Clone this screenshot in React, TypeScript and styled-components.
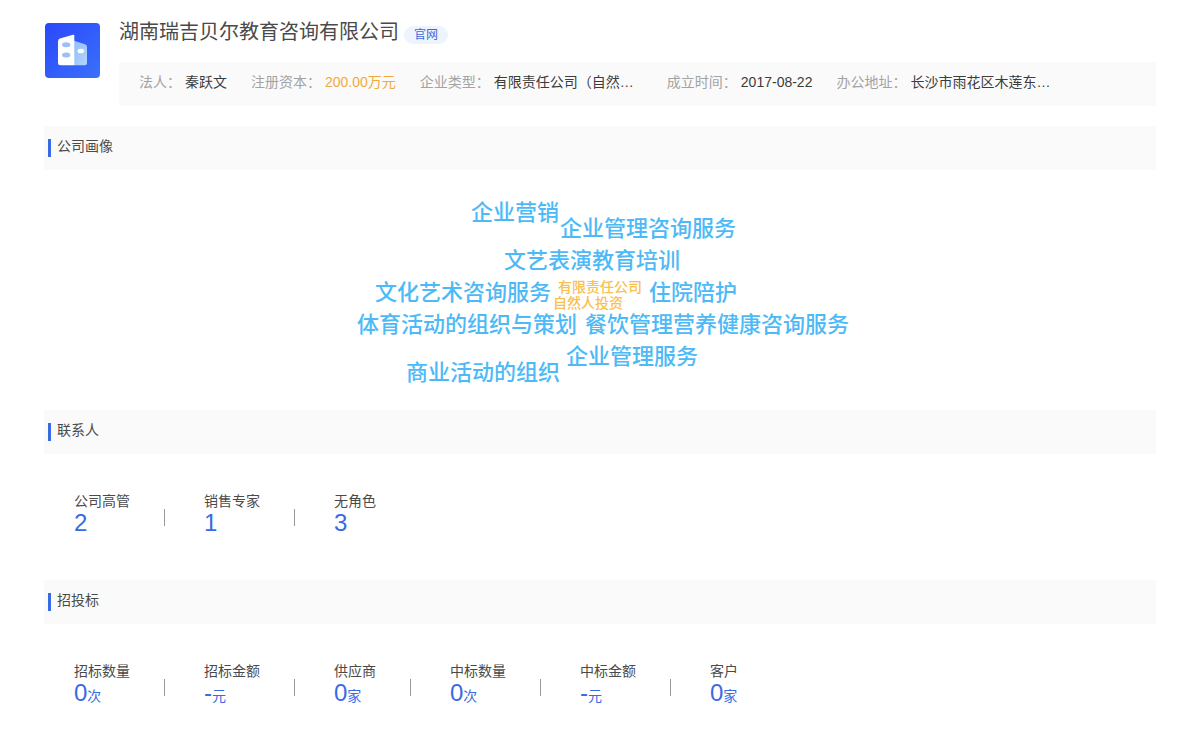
import React from "react";
import styled, { createGlobalStyle } from "styled-components";

const GlobalStyle = createGlobalStyle`
  * { box-sizing: border-box; }
  body {
    margin: 0;
    background: #fff;
    color: #4a4a4a;
    font-family: "Liberation Sans", "Noto Sans CJK SC", sans-serif;
    font-size: 14px;
    line-height: 20px;
  }
  h1, h2, dl, dt, dd { margin: 0; font-weight: 400; }
`;

const Page = styled.main`
  padding: 20px 44px;
`;

const Header = styled.header`
  display: flex;
  gap: 19px;
  padding-left: 1px;
  margin-bottom: 20px;
`;

const Logo = styled.svg`
  flex: none;
  width: 55px;
  height: 55px;
  margin-top: 3px;
`;

const Summary = styled.div`
  flex: 1;
  min-width: 0;
`;

const TitleRow = styled.div`
  display: flex;
  align-items: flex-end;
  gap: 5px;
  margin-bottom: 18px;
`;

const CompanyName = styled.h1`
  font-size: 20px;
  line-height: 24px;
`;

const SiteLink = styled.a`
  padding: 0 10px;
  border-radius: 9px;
  background: #edf4fe;
  color: #3a6be0;
  font-size: 12px;
  line-height: 18px;
  text-decoration: none;
`;

const Facts = styled.dl`
  display: flex;
  flex-wrap: wrap;
  gap: 0 24px;
  padding: 10px 20px 14px;
  background: #fafafa;
`;

const Fact = styled.div`
  display: flex;
  gap: 4px;
`;

const FactLabel = styled.dt`
  color: #a3a3a3;
`;

const FactValue = styled.dd<{ $accent?: boolean; $wide?: boolean }>`
  min-width: ${(p) => (p.$wide ? "149px" : "0")};
  white-space: nowrap;
  color: ${(p) => (p.$accent ? "#f2a93b" : "#3c3c3c")};
`;

const SectionHeader = styled.div`
  display: flex;
  gap: 6px;
  padding: 13px 4px;
  background: #fafafa;
`;

const Marker = styled.span`
  width: 3px;
  height: 18px;
  background: #386ae6;
`;

const SectionTitle = styled.h2`
  font-size: 14px;
  line-height: 14px;
`;

const Cloud = styled.div`
  position: relative;
  height: 240px;
`;

const Word = styled.span<{ $x: number; $y: number; $small?: boolean }>`
  position: absolute;
  left: calc(50% + ${(p) => p.$x}px);
  top: ${(p) => p.$y}px;
  transform: translateY(-50%);
  white-space: nowrap;
  font-weight: 500;
  font-size: ${(p) => (p.$small ? 14 : 22)}px;
  line-height: ${(p) => (p.$small ? 16 : 32)}px;
  color: ${(p) => (p.$small ? "#f9c04d" : "#4dbaf7")};
`;

const Stats = styled.dl`
  display: flex;
  flex-wrap: wrap;
  padding: 37px 30px 45px;
`;

const Stat = styled.div`
  display: flex;

  &:not(:last-child)::after {
    content: "";
    width: 1px;
    height: 17px;
    margin: 18px 39px 0 34px;
    background: #999;
  }
`;

const StatBody = styled.div``;

const StatLabel = styled.dt``;

const StatValue = styled.dd`
  color: #386ae6;
  font-size: 24px;
  line-height: 24px;
`;

const Unit = styled.small`
  font-size: 14px;
`;

type FactItem = { label: string; value: string; accent?: boolean; wide?: boolean };

const facts: FactItem[] = [
  { label: "法人：", value: "秦跃文" },
  { label: "注册资本：", value: "200.00万元", accent: true },
  { label: "企业类型：", value: "有限责任公司（自然…", wide: true },
  { label: "成立时间：", value: "2017-08-22" },
  { label: "办公地址：", value: "长沙市雨花区木莲东…", wide: true },
];

const words = [
  { text: "企业营销", x: -129, y: 43 },
  { text: "企业管理咨询服务", x: -40, y: 59 },
  { text: "文艺表演教育培训", x: -96, y: 91 },
  { text: "文化艺术咨询服务", x: -225, y: 123 },
  { text: "有限责任公司", x: -42, y: 117, small: true },
  { text: "自然人投资", x: -47, y: 133, small: true },
  { text: "住院陪护", x: 49, y: 123 },
  { text: "体育活动的组织与策划", x: -243, y: 155 },
  { text: "餐饮管理营养健康咨询服务", x: -15, y: 155 },
  { text: "企业管理服务", x: -34, y: 187 },
  { text: "商业活动的组织", x: -194, y: 203 },
];

type StatItem = { label: string; value: string; unit?: string };

const contacts: StatItem[] = [
  { label: "公司高管", value: "2" },
  { label: "销售专家", value: "1" },
  { label: "无角色", value: "3" },
];

const bids: StatItem[] = [
  { label: "招标数量", value: "0", unit: "次" },
  { label: "招标金额", value: "-", unit: "元" },
  { label: "供应商", value: "0", unit: "家" },
  { label: "中标数量", value: "0", unit: "次" },
  { label: "中标金额", value: "-", unit: "元" },
  { label: "客户", value: "0", unit: "家" },
];

function Heading({ children }: { children: React.ReactNode }) {
  return (
    <SectionHeader>
      <Marker />
      <SectionTitle>{children}</SectionTitle>
    </SectionHeader>
  );
}

function StatList({ items }: { items: StatItem[] }) {
  return (
    <Stats>
      {items.map((s) => (
        <Stat key={s.label}>
          <StatBody>
            <StatLabel>{s.label}</StatLabel>
            <StatValue>
              {s.value}
              {s.unit && <Unit>{s.unit}</Unit>}
            </StatValue>
          </StatBody>
        </Stat>
      ))}
    </Stats>
  );
}

function BuildingLogo() {
  return (
    <Logo viewBox="0 0 55 55" aria-hidden="true">
      <defs>
        <linearGradient id="tile" x1="0" y1="0" x2="1" y2="1">
          <stop offset="0" stopColor="#2a48fa" />
          <stop offset="1" stopColor="#3a70fb" />
        </linearGradient>
        <linearGradient id="wing" x1="0" y1="0" x2="1" y2="1">
          <stop offset="0" stopColor="#8fbcfb" />
          <stop offset="1" stopColor="#b4d6fd" />
        </linearGradient>
      </defs>
      <rect width="55" height="55" rx="4" fill="url(#tile)" />
      <path d="M29 17.8L40 21.2Q42 22 42 24V40Q42 42.3 39.8 42.3H29Z" fill="url(#wing)" />
      <path d="M15 15.6Q13 16.2 13 18.4V39.8Q13 42.3 15.6 42.3H29.3V12.6Q29.3 11.4 28 11.8Z" fill="#fff" />
      <ellipse cx="21.2" cy="21.8" rx="4.2" ry="2.5" fill="#9dbff8" />
      <ellipse cx="21.2" cy="32" rx="4.2" ry="2.5" fill="#9dbff8" />
      <ellipse cx="35.8" cy="28" rx="3.3" ry="2.3" fill="#fff" />
    </Logo>
  );
}

export default function App() {
  return (
    <>
      <GlobalStyle />
      <Page>
        <Header>
          <BuildingLogo />
          <Summary>
            <TitleRow>
              <CompanyName>湖南瑞吉贝尔教育咨询有限公司</CompanyName>
              <SiteLink href="#">官网</SiteLink>
            </TitleRow>
            <Facts>
              {facts.map((f) => (
                <Fact key={f.label}>
                  <FactLabel>{f.label}</FactLabel>
                  <FactValue $accent={f.accent} $wide={f.wide}>
                    {f.value}
                  </FactValue>
                </Fact>
              ))}
            </Facts>
          </Summary>
        </Header>
        <section>
          <Heading>公司画像</Heading>
          <Cloud>
            {words.map((w) => (
              <Word key={w.text} $x={w.x} $y={w.y} $small={w.small}>
                {w.text}
              </Word>
            ))}
          </Cloud>
        </section>
        <section>
          <Heading>联系人</Heading>
          <StatList items={contacts} />
        </section>
        <section>
          <Heading>招投标</Heading>
          <StatList items={bids} />
        </section>
      </Page>
    </>
  );
}
